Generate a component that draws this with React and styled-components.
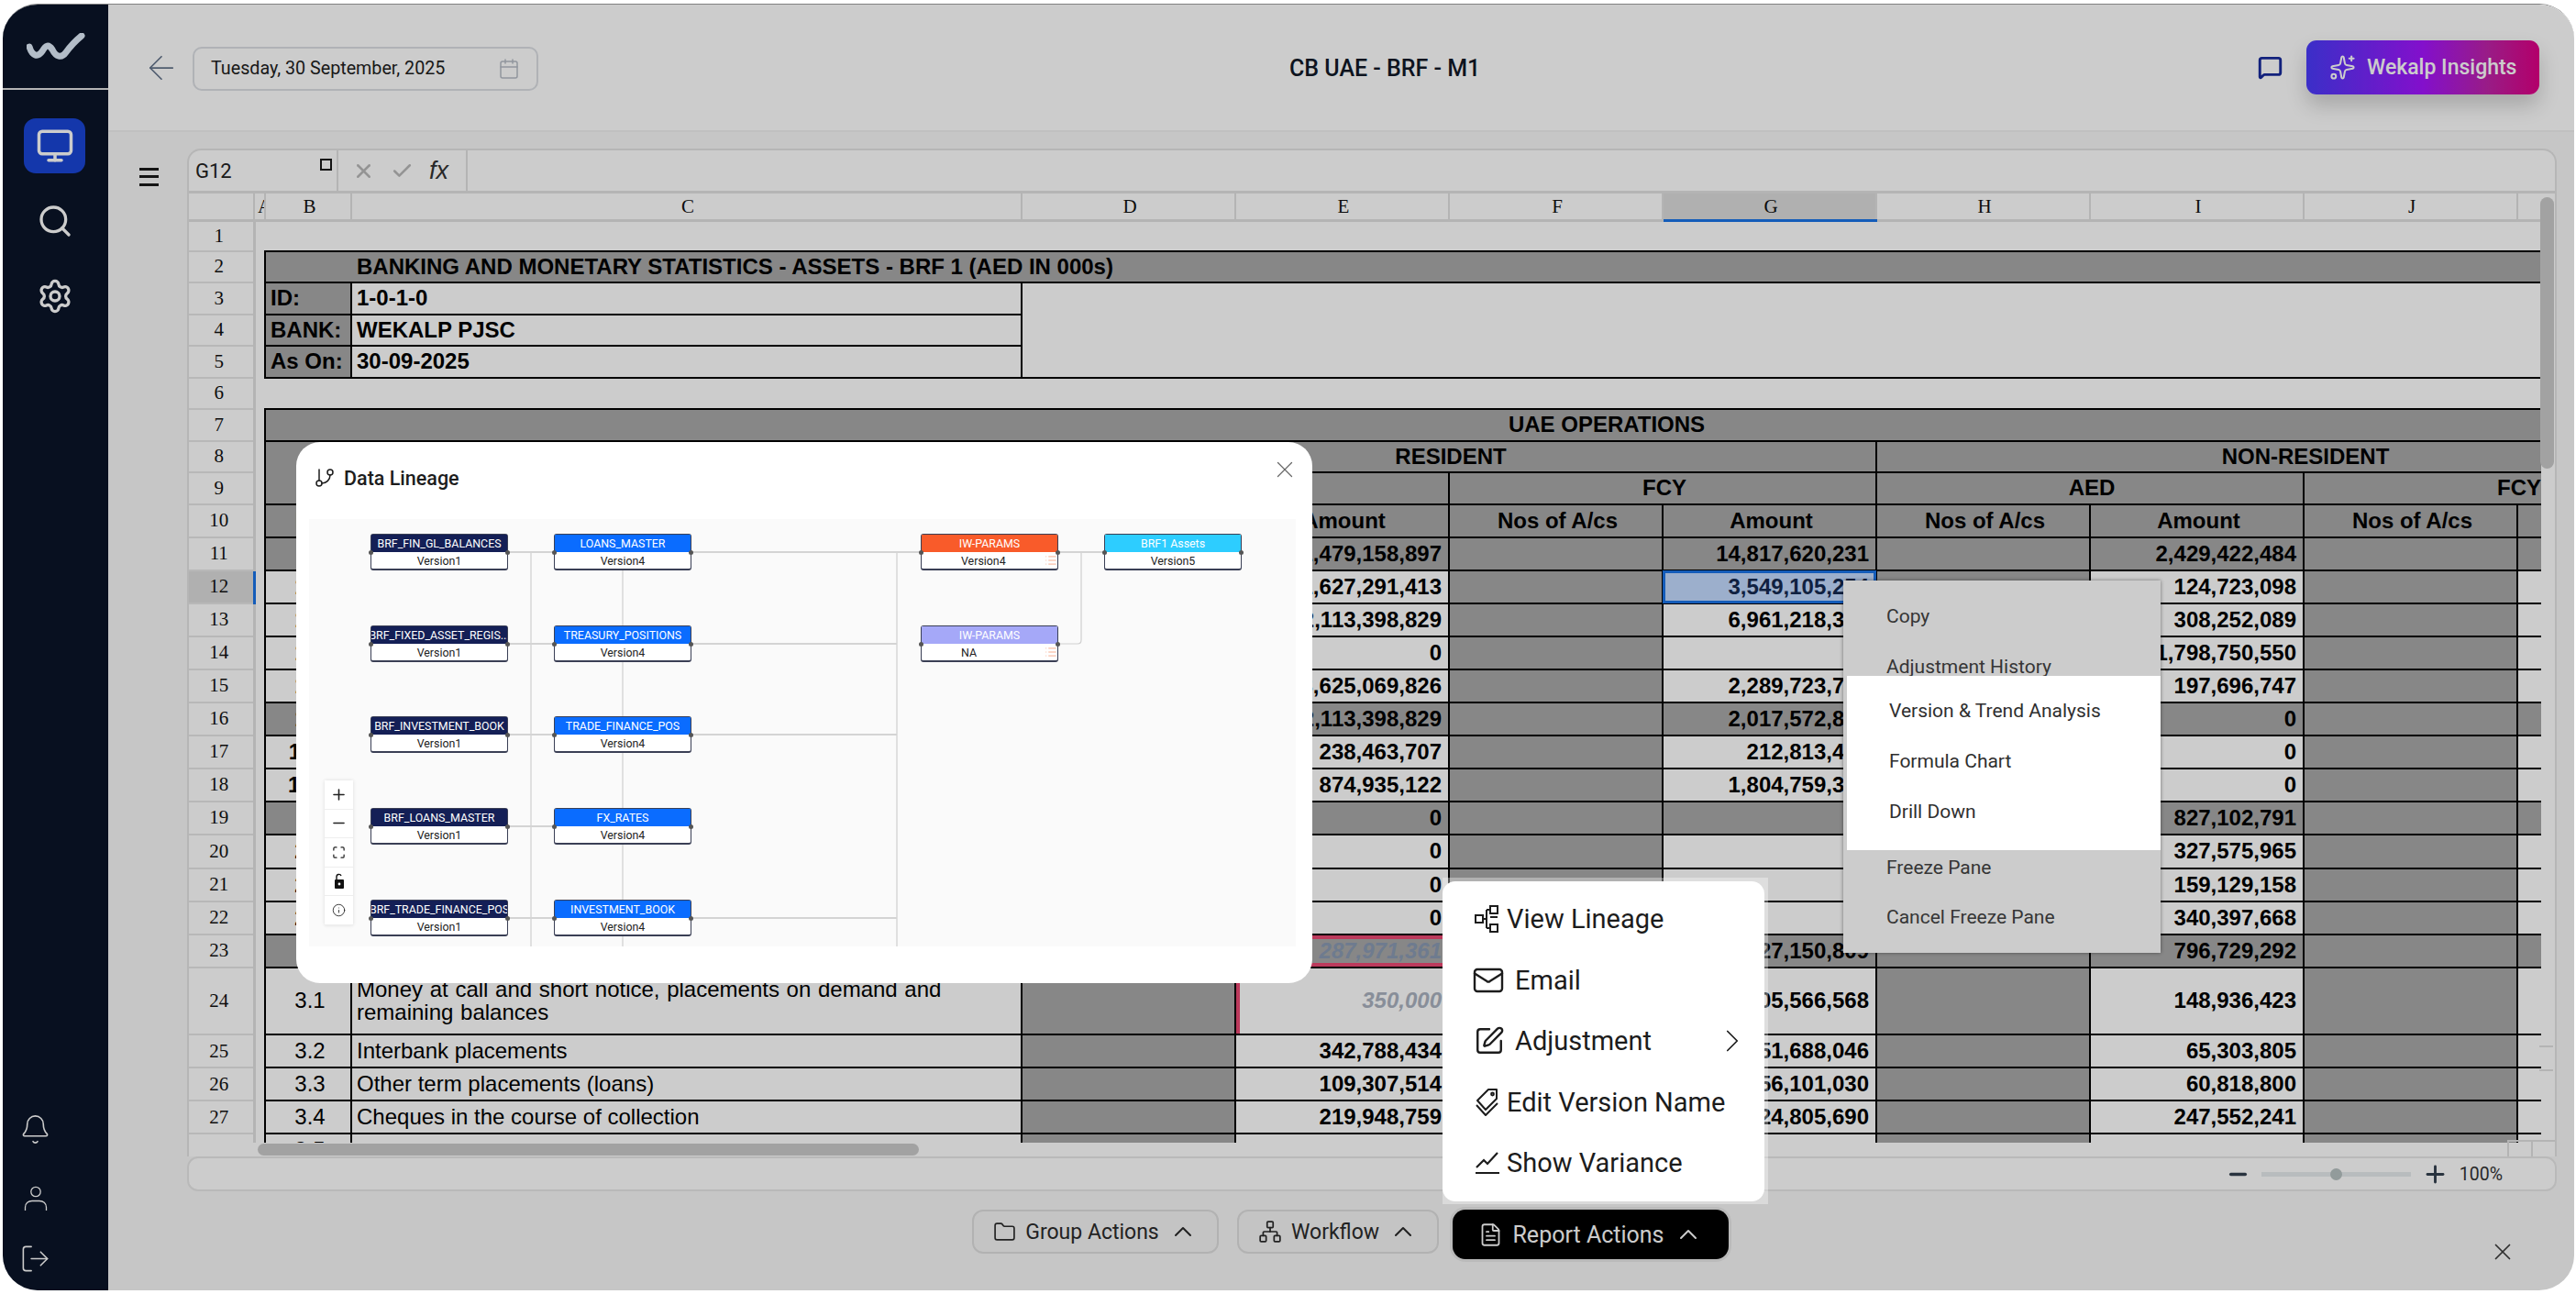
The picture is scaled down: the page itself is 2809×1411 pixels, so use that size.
import React from 'react';
import styled, { createGlobalStyle } from 'styled-components';
import {
  ArrowLeft, Bell, Calendar, Check, ChevronRight, ChevronUp, FileText, Folder, GitBranch, Info, List,
  LogOut, Mail, Maximize, MessageSquare, Minus, Monitor, Network, Plus, Search, Settings, Sparkles,
  SquarePen, X,
} from 'lucide-react';

const GlobalStyle = createGlobalStyle`
  html, body { margin: 0; padding: 0; background: #fff; }
  * { box-sizing: border-box; }
  #root { font-family: Roboto, "Liberation Sans", sans-serif; }
`;

const Frame = styled.div`
  position: relative;
  display: flex;
  width: 2804px;
  height: 1403px;
  margin: 4px 0 0 3px;
  border-top: 1px solid #808080;
  border-radius: 38px;
  overflow: hidden;
  background: #fff;
`;

const Scrim = styled.div`
  position: absolute;
  inset: 0;
  z-index: 2;
  background: rgba(0, 0, 0, 0.2);
`;

/* sidebar */
const Sidebar = styled.aside`
  flex: 0 0 115px;
  display: flex;
  flex-direction: column;
  background: #0b1528;
  color: #fff;
`;
const LogoBlock = styled.div`
  height: 93px;
  display: flex;
  align-items: center;
  justify-content: center;
  border-bottom: 2px solid #e2e2e2;
`;
const NavList = styled.nav`
  display: flex;
  flex-direction: column;
  gap: 22px;
  padding: 31px 0 0 23px;
  flex: 1;
`;
const NavItem = styled.div`
  width: 67px;
  height: 60px;
  border-radius: 13px;
  display: flex;
  align-items: center;
  justify-content: center;
  background: ${(p) => (p.$active ? '#1a45d6' : 'transparent')};
`;
const SideFoot = styled.div`
  width: 35px;
  margin-left: 18px;
  padding-bottom: 17px;
  display: flex;
  flex-direction: column;
  align-items: center;
  gap: 34px;
`;
const BellIcon = styled(Bell)`
  margin-bottom: 10px;
`;

/* main */
const Main = styled.main`
  flex: 1;
  display: flex;
  flex-direction: column;
  min-width: 0;
  background: #f8f8f8;
`;
const Header = styled.header`
  height: 139px;
  flex: none;
  display: flex;
  align-items: center;
  padding: 0 38px 0 37px;
  background: #fff;
  border-bottom: 2px solid #f1f1f1;
`;
const HeaderLeft = styled.div`
  width: 1251px;
  display: flex;
  align-items: center;
  gap: 13px;
`;
const BackIcon = styled(ArrowLeft)`
  color: #64748b;
`;
const DateField = styled.div`
  width: 377px;
  height: 48px;
  margin-top: 2px;
  border: 2px solid #dcdfe4;
  border-radius: 10px;
  padding: 0 18px;
  display: flex;
  align-items: center;
  justify-content: space-between;
  font-size: 19.7px;
  color: #1e1e1e;
`;
const Title = styled.h1`
  margin: 2px 0 0;
  font-size: 25px;
  font-weight: 500;
  color: #111827;
`;
const HeaderRight = styled.div`
  margin-left: auto;
  display: flex;
  align-items: center;
  gap: 26px;
`;
const InsightsButton = styled.button`
  width: 254px;
  height: 59px;
  border: none;
  border-radius: 11px;
  display: flex;
  align-items: center;
  gap: 12px;
  padding: 0 0 0 25px;
  font: 500 23px Roboto, sans-serif;
  color: #fff;
  background: linear-gradient(90deg, #4a3bfb 0%, #a414ff 50%, #c023a8 78%, #e00085 100%);
  box-shadow: 0 12px 22px rgba(0, 0, 0, 0.18);
`;
const Workspace = styled.div`
  height: 1155px;
  flex: none;
  display: flex;
  gap: 31px;
  padding: 18px 19px 0 34px;
`;
const BurgerBars = styled.div`
  flex: none;
  width: 21px;
  height: 20px;
  margin-top: 21px;
  border-top: 3px solid #1a1a1a;
  border-bottom: 3px solid #1a1a1a;
  position: relative;
  &::after {
    content: '';
    position: absolute;
    left: 0;
    right: 0;
    top: 5px;
    height: 3px;
    background: #1a1a1a;
  }
`;

/* spreadsheet */
const Sheet = styled.section`
  width: 2584px;
  display: flex;
  flex-direction: column;
`;
const SheetBody = styled.div`
  position: relative;
  height: 1100px;
  background: #fff;
  border: 2px solid #e4e4e4;
  border-bottom: none;
  border-radius: 15px 15px 0 0;
  overflow: hidden;
`;
const FormulaBar = styled.div`
  height: 47px;
  display: flex;
  align-items: stretch;
  border-bottom: 3px solid #e2e2e2;
`;
const NameBox = styled.div`
  position: relative;
  width: 163px;
  padding-left: 7px;
  display: flex;
  align-items: center;
  font-size: 22px;
  color: #222;
  border-right: 2px solid #e2e2e2;
`;
const NameBoxHandle = styled.span`
  position: absolute;
  top: 9px;
  right: 5px;
  width: 13px;
  height: 13px;
  border: 2px solid #1a1a1a;
`;
const FormulaTools = styled.div`
  width: 141px;
  display: flex;
  align-items: center;
  gap: 17px;
  padding-left: 15px;
  color: #b9b9b9;
  border-right: 2px solid #e2e2e2;
`;
const FxMark = styled.span`
  font: italic 27px "Liberation Sans", sans-serif;
  color: #333;
`;
const GridViewport = styled.div`
  width: 2565px;
  height: 1035px;
  overflow: hidden;
`;
const Grid = styled.table`
  table-layout: fixed;
  border-collapse: collapse;
  width: 3002px;
  font-family: "Liberation Sans", Arial, sans-serif;
  font-size: 24px;
  color: #000;
`;
const GridRow = styled.tr`
  height: ${(p) => p.$h}px;
`;
const ColHead = styled.th`
  font: 400 21px "Liberation Serif", serif;
  color: #111;
  padding: 0 0 0 3px;
  overflow: hidden;
  border-right: 2px solid #e2e2e2;
  border-bottom: 3px solid ${(p) => (p.$active ? '#1a73e8' : '#e2e2e2')};
  background: ${(p) => (p.$active ? '#dcdcdc' : '#fff')};
`;
const RowHead = styled.td`
  font: 400 21px "Liberation Serif", serif;
  color: #111;
  text-align: center;
  padding: 0 4px 0 0;
  border-bottom: 2px solid #e6e6e6;
  border-right: ${(p) => (p.$active ? '3px solid #1a73e8' : '3px solid #e2e2e2')};
  background: ${(p) => (p.$active ? '#dcdcdc' : '#fff')};
`;
const Gutter = styled.td`
  padding: 0;
  background: #fff;
`;
const Cell = styled.td`
  padding: ${(p) => {
    if (p.$indent) return `0 8px 0 ${p.$indent}px`;
    if (p.$align === 'center') return '0 4px 0 8px';
    return p.$align === 'right' ? '0 7px' : '0 5px';
  }};
  border: 2px solid #000;
  background: ${(p) => (p.$dark ? '#a9a9a9' : '#fff')};
  font-weight: ${(p) => (p.$plain ? 400 : 700)};
  text-align: ${(p) => p.$align || 'left'};
  white-space: ${(p) => (p.$wrap ? 'normal' : 'nowrap')};
  line-height: ${(p) => (p.$wrap ? '25.5px' : 'normal')};
  word-spacing: ${(p) => (p.$wrap ? '1px' : 'normal')};
  overflow: hidden;
`;
const SelectedCell = styled(Cell)`
  background: #c3dbff;
  color: #142a52;
  outline: 3px solid #1a73e8;
  outline-offset: -3px;
`;
const FlaggedCell = styled(Cell)`
  font-style: italic;
  color: ${(p) => (p.$dark ? '#8a9ab3' : '#aab2c0')};
  box-shadow: ${(p) => (p.$dark ? 'inset 0 4px 0 #ec4973, inset 0 -4px 0 #ec4973' : 'inset 4px 0 0 #ec4973')};
`;
const HScroll = styled.div`
  height: 16px;
  padding: 1px 0 0 75px;
`;
const HThumb = styled.div`
  width: 721px;
  height: 13px;
  border-radius: 7px;
  background: #cbcbcb;
`;
const VThumb = styled.div`
  position: absolute;
  top: 51px;
  right: 1px;
  width: 15px;
  height: 296px;
  border-radius: 8px;
  background: #cbcbcb;
`;
const ScrollTick = styled.div`
  position: absolute;
  top: ${(p) => p.$top}px;
  right: 2px;
  width: 15px;
  height: 2px;
  background: #e2e2e2;
`;
const CornerBox = styled.div`
  position: absolute;
  right: 0;
  bottom: 0;
  width: 52px;
  height: 18px;
  border-left: 2px solid #e2e2e2;
  border-top: 2px solid #e2e2e2;
  &::after {
    content: '';
    position: absolute;
    left: 24px;
    top: 0;
    bottom: 0;
    border-left: 2px solid #e2e2e2;
  }
`;
const SheetFooter = styled.div`
  height: 38px;
  display: flex;
  align-items: center;
  justify-content: flex-end;
  padding-right: 57px;
  background: #fff;
  border: 2px solid #e8e8e8;
  border-radius: 12px;
  color: #34404f;
`;
const ZoomTrack = styled.div`
  position: relative;
  width: 163px;
  height: 5px;
  margin: 0 12px;
  background: #e6ebee;
  &::after {
    content: '';
    position: absolute;
    left: 75px;
    top: -4px;
    width: 13px;
    height: 13px;
    border-radius: 50%;
    background: #b7c2c2;
  }
`;
const ZoomLabel = styled.span`
  margin-left: 12px;
  font-size: 19.5px;
  color: #333;
`;

/* action bar */
const ActionBar = styled.div`
  position: relative;
  flex: 1;
  display: flex;
  align-items: flex-start;
  gap: 20px;
  padding: 20px 63px 0 942px;
`;
const ActionButton = styled.button`
  height: ${(p) => (p.$dark ? 54 : 48)}px;
  width: ${(p) => p.$w}px;
  margin-left: ${(p) => (p.$dark ? -5 : 0)}px;
  display: flex;
  align-items: center;
  justify-content: center;
  gap: 10px;
  border: ${(p) => (p.$dark ? 'none' : '2px solid #dfdfdf')};
  border-radius: ${(p) => (p.$dark ? 14 : 12)}px;
  background: ${(p) => (p.$dark ? '#000' : '#f5f5f5')};
  color: ${(p) => (p.$dark ? '#fff' : '#2b2b2b')};
  font: 400 ${(p) => (p.$dark ? 25 : 23)}px Roboto, sans-serif;
  box-shadow: ${(p) => (p.$dark ? '0 0 0 3px rgba(0, 0, 0, 0.06)' : 'none')};
`;
const BarClose = styled.div`
  margin-left: auto;
  margin-top: 31px;
  color: #3c3c3c;
  display: flex;
`;

/* right click menu, partly lifted over the scrim */
const ContextMenu = styled.div`
  position: absolute;
  left: 2007px;
  top: 628px;
  z-index: 1;
  width: 346px;
  height: 406px;
  padding-top: 12px;
  background: #fff;
  box-shadow: 0 0 4px rgba(0, 0, 0, 0.45);
`;
const ContextItem = styled.div`
  height: 54.7px;
  display: flex;
  align-items: center;
  padding-left: ${(p) => (p.$lifted ? 46 : 47)}px;
  font-size: 21px;
  color: ${(p) => (p.$lifted ? '#2f2f2f' : '#444')};
`;
const ContextGap = styled.div`
  height: 164px;
`;
const ContextLifted = styled.div`
  position: absolute;
  left: 2011px;
  top: 732px;
  z-index: 3;
  width: 342px;
  height: 190px;
  padding-top: 11px;
  background: #fff;
`;

/* report actions menu */
const MenuHalo = styled.div`
  position: absolute;
  left: 1570px;
  top: 952px;
  z-index: 3;
  width: 355px;
  height: 356px;
  padding: 4px 4px 3px 0;
  background: rgba(255, 255, 255, 0.35);
`;
const MenuPanel = styled.div`
  height: 100%;
  background: #fff;
  border-radius: 14px;
  padding: 8px 0 0 35px;
  display: flex;
  flex-direction: column;
`;
const MenuItem = styled.div`
  height: 66.5px;
  display: flex;
  align-items: center;
  gap: ${(p) => (p.$wide ? 11 : 8)}px;
  font-size: 29px;
  color: #1c1c1c;
`;
const MailIcon = styled(Mail)`
  margin-left: -3px;
`;
const PenIcon = styled(SquarePen)`
  margin-left: -1px;
`;
const MenuChevron = styled(ChevronRight)`
  margin-left: auto;
  margin-right: 14px;
`;

/* data lineage dialog */
const Modal = styled.div`
  position: absolute;
  left: 320px;
  top: 477px;
  z-index: 3;
  width: 1108px;
  height: 590px;
  border-radius: 26px;
  background: #fff;
`;
const ModalHead = styled.div`
  height: 84px;
  display: flex;
  align-items: center;
  gap: 9px;
  padding: 0 0 6px 19px;
  font-size: 21.5px;
  font-weight: 500;
  color: #1d1d1d;
`;
const ModalClose = styled(X)`
  position: absolute;
  top: 15px;
  right: 15px;
  color: #666;
`;
const Canvas = styled.div`
  position: relative;
  width: 1076px;
  height: 466px;
  margin: 0 0 0 14px;
  background: #fafafa;
  overflow: hidden;
`;
const Edges = styled.svg`
  position: absolute;
  inset: 0;
`;
const Node = styled.div`
  position: absolute;
  left: ${(p) => p.$x}px;
  top: ${(p) => p.$y}px;
  width: 150px;
  height: 40px;
  background: #fff;
  border: 1px solid #3a3f55;
  border-width: 1px 1px 2px;
  border-radius: 3px;
  &::before,
  &::after {
    content: '';
    position: absolute;
    top: 17px;
    width: 5px;
    height: 5px;
    border-radius: 50%;
    background: #555;
  }
  &::before { left: -3px; }
  &::after { right: -3px; }
`;
const NodeTitle = styled.div`
  height: 19px;
  display: flex;
  align-items: center;
  justify-content: center;
  font-size: 12.4px;
  white-space: nowrap;
  overflow: hidden;
  color: #fff;
  background: ${(p) => p.$color};
`;
const NodeVersion = styled.div`
  position: relative;
  height: 19px;
  display: flex;
  align-items: center;
  justify-content: ${(p) => (p.$listed ? 'flex-start' : 'center')};
  padding-left: ${(p) => (p.$listed ? 43 : 0)}px;
  font-size: 12.4px;
  color: #222;
`;
const NodeList = styled(List)`
  position: absolute;
  right: 0;
  top: 2px;
  color: #f7a888;
`;
const Controls = styled.div`
  position: absolute;
  left: 17px;
  top: 285px;
  width: 31px;
  display: flex;
  flex-direction: column;
  background: #fff;
  box-shadow: 0 0 4px rgba(0, 0, 0, 0.12);
  z-index: 1;
`;
const ControlButton = styled.div`
  height: 31.6px;
  display: flex;
  align-items: center;
  justify-content: center;
  border-bottom: 1px solid #eee;
  color: #222;
`;

const Logo = () => (
  <svg width="64" height="30" viewBox="0 0 64 30" fill="none">
    <path d="M3 15 C6 25 12 27 17 20 C21 13 24 12 28 18 C32 26 38 28 43 21 C48 14 54 8 60 3" stroke="#e0edfb" strokeWidth="7" strokeLinecap="round" />
  </svg>
);

const PersonIcon = () => (
  <svg width="28" height="28" viewBox="0 0 28 28" fill="none" stroke="#fff" strokeWidth="1.3">
    <circle cx="14" cy="6.5" r="5.2" />
    <path d="M2.5 27 V23.5 C2.5 19 6 16.5 10 16.5 H18 C22 16.5 25.5 19 25.5 23.5 V27" />
  </svg>
);

const LineageIcon = () => (
  <svg width="27" height="32" viewBox="0 0 27 32" fill="none" stroke="#1c1c1c" strokeWidth="2">
    <rect x="1" y="12" width="8" height="8" />
    <rect x="17" y="2" width="8" height="8" />
    <rect x="17" y="22" width="8" height="8" />
    <path d="M9 16 H13 M13 6 V26 M13 6 H17 M13 26 H17 M17 14 H25" />
  </svg>
);

const VersionTagIcon = () => (
  <svg width="27" height="32" viewBox="0 0 27 32" fill="none" stroke="#1c1c1c" strokeWidth="2" strokeLinejoin="round">
    <path d="M15 2 H24 V12 L12 24 L3 14 Z" />
    <circle cx="19.5" cy="7" r="1.4" />
    <path d="M2 19 L12 30 L25 17" />
  </svg>
);

const VarianceIcon = () => (
  <svg width="27" height="26" viewBox="0 0 27 26" fill="none" stroke="#1c1c1c" strokeWidth="2.2">
    <path d="M1 24 H27 M2 18 L10 10 L14 14 L25 2" />
  </svg>
);

const LockIcon = () => (
  <svg width="14" height="20" viewBox="0 0 14 20" fill="#111">
    <rect x="2" y="8" width="10" height="10" rx="1" />
    <path d="M4 8 V5 C4 2 8 1.5 9 4" fill="none" stroke="#111" strokeWidth="1.4" />
    <circle cx="7" cy="13" r="1.4" fill="#fff" />
  </svg>
);

const dataRows = [
  { n: 11, h: 36, no: '1', dark: true, e: '1,479,158,897', g: '14,817,620,231', i: '2,429,422,484' },
  { n: 12, h: 36, no: '1.1', e: '1,627,291,413', g: '3,549,105,254', i: '124,723,098', selected: true },
  { n: 13, h: 36, no: '1.2', e: '2,113,398,829', g: '6,961,218,389', i: '308,252,089' },
  { n: 14, h: 36, no: '1.3', e: '0', g: '', i: '1,798,750,550' },
  { n: 15, h: 36, no: '1.4', e: '3,625,069,826', g: '2,289,723,781', i: '197,696,747' },
  { n: 16, h: 36, no: '1.5', dark: true, e: '2,113,398,829', g: '2,017,572,864', i: '0' },
  { n: 17, h: 36, no: '1.5a', e: '238,463,707', g: '212,813,452', i: '0' },
  { n: 18, h: 36, no: '1.5b', e: '874,935,122', g: '1,804,759,319', i: '0' },
  { n: 19, h: 36, no: '2', dark: true, e: '0', g: '', i: '827,102,791' },
  { n: 20, h: 37, no: '2.1', e: '0', g: '', i: '327,575,965' },
  { n: 21, h: 36, no: '2.2', e: '0', g: '', i: '159,129,158' },
  { n: 22, h: 36, no: '2.3', e: '0', g: '', i: '340,397,668' },
  { n: 23, h: 36, no: '3', dark: true, e: '287,971,361', g: '8,127,150,809', i: '796,729,292', flagged: true },
  { n: 24, h: 73.5, no: '3.1', e: '350,000', g: '6,105,566,568', i: '148,936,423', flagged: true, wrap: true, label: 'Money at call and short notice, placements on demand and remaining balances' },
  { n: 25, h: 36, no: '3.2', e: '342,788,434', g: '151,688,046', i: '65,303,805', label: 'Interbank placements' },
  { n: 26, h: 36, no: '3.3', e: '109,307,514', g: '56,101,030', i: '60,818,800', label: 'Other term placements (loans)' },
  { n: 27, h: 36, no: '3.4', e: '219,948,759', g: '24,805,690', i: '247,552,241', label: 'Cheques in the course of collection' },
  { n: 28, h: 36, no: '3.5', e: '', g: '', i: '', label: '' },
];

const columns = ['A', 'B', 'C', 'D', 'E', 'F', 'G', 'H', 'I', 'J', 'K', 'L'];
const colWidth = (c) => (c === 'A' ? 12 : c === 'B' ? 94 : c === 'C' ? 731 : 233);

const Amount = ({ row, value }) => {
  if (row.flagged && value === row.e) {
    return <FlaggedCell $dark={row.dark} $align="right">{value}</FlaggedCell>;
  }
  if (row.selected && value === row.g) {
    return <SelectedCell $align="right">{value}</SelectedCell>;
  }
  return <Cell $dark={row.dark} $align="right">{value}</Cell>;
};

const DataRow = ({ row }) => {
  const isItem = row.n >= 24;
  return (
    <GridRow $h={row.h}>
      <RowHead $active={row.selected}>{row.n}</RowHead>
      <Gutter />
      <Cell $dark={row.dark} $align="center" $plain={isItem}>{row.no}</Cell>
      <Cell $dark={row.dark} $plain $wrap={row.wrap}>{row.label}</Cell>
      <Cell $dark />
      <Amount row={row} value={row.e} />
      <Cell $dark />
      <Amount row={row} value={row.g} />
      <Cell $dark />
      <Amount row={row} value={row.i} />
      <Cell $dark />
      <Cell $dark={row.dark} />
      <Cell $dark />
    </GridRow>
  );
};

const SpreadsheetGrid = () => (
  <Grid>
    <colgroup>
      <col width="71" />
      {columns.map((c) => <col key={c} width={colWidth(c)} />)}
    </colgroup>
    <tbody>
      <GridRow $h={29.5}>
        <ColHead />
        {columns.map((c) => <ColHead key={c} $active={c === 'G'}>{c}</ColHead>)}
      </GridRow>
      <GridRow $h={33}><RowHead>1</RowHead><Gutter colSpan={12} /></GridRow>
      <GridRow $h={34}>
        <RowHead>2</RowHead>
        <Gutter />
        <Cell $dark colSpan={11} $indent={99}>BANKING AND MONETARY STATISTICS - ASSETS - BRF 1 (AED IN 000s)</Cell>
      </GridRow>
      <GridRow $h={35}>
        <RowHead>3</RowHead>
        <Gutter />
        <Cell $dark>ID:</Cell>
        <Cell>1-0-1-0</Cell>
        <Cell colSpan={9} rowSpan={3} />
      </GridRow>
      <GridRow $h={34}>
        <RowHead>4</RowHead>
        <Gutter />
        <Cell $dark>BANK:</Cell>
        <Cell>WEKALP PJSC</Cell>
      </GridRow>
      <GridRow $h={35}>
        <RowHead>5</RowHead>
        <Gutter />
        <Cell $dark>As On:</Cell>
        <Cell>30-09-2025</Cell>
      </GridRow>
      <GridRow $h={34}><RowHead>6</RowHead><Gutter colSpan={12} /></GridRow>
      <GridRow $h={35}>
        <RowHead>7</RowHead>
        <Gutter />
        <Cell $dark colSpan={11} $align="center">UAE OPERATIONS</Cell>
      </GridRow>
      <GridRow $h={34}>
        <RowHead>8</RowHead>
        <Gutter />
        <Cell $dark colSpan={2} rowSpan={2} />
        <Cell $dark colSpan={4} $align="center">RESIDENT</Cell>
        <Cell $dark colSpan={4} $align="center">NON-RESIDENT</Cell>
        <Cell $dark />
      </GridRow>
      <GridRow $h={35}>
        <RowHead>9</RowHead>
        <Gutter />
        <Cell $dark colSpan={2} $align="center">AED</Cell>
        <Cell $dark colSpan={2} $align="center">FCY</Cell>
        <Cell $dark colSpan={2} $align="center">AED</Cell>
        <Cell $dark colSpan={2} $align="center">FCY</Cell>
        <Cell $dark />
      </GridRow>
      <GridRow $h={36}>
        <RowHead>10</RowHead>
        <Gutter />
        <Cell $dark $align="center">No</Cell>
        <Cell $dark />
        {['D', 'F', 'H', 'J'].map((c) => (
          <React.Fragment key={c}>
            <Cell $dark $align="center">Nos of A/cs</Cell>
            <Cell $dark $align="center">Amount</Cell>
          </React.Fragment>
        ))}
        <Cell $dark />
      </GridRow>
      {dataRows.map((row) => <DataRow key={row.n} row={row} />)}
    </tbody>
  </Grid>
);

const lineageNodes = [
  { name: 'BRF_FIN_GL_BALANCES', ver: 'Version1', x: 67, y: 16, color: '#141f56' },
  { name: 'BRF_FIXED_ASSET_REGIS...', ver: 'Version1', x: 67, y: 116, color: '#141f56' },
  { name: 'BRF_INVESTMENT_BOOK', ver: 'Version1', x: 67, y: 215, color: '#141f56' },
  { name: 'BRF_LOANS_MASTER', ver: 'Version1', x: 67, y: 315, color: '#141f56' },
  { name: 'BRF_TRADE_FINANCE_POS', ver: 'Version1', x: 67, y: 415, color: '#141f56' },
  { name: 'LOANS_MASTER', ver: 'Version4', x: 267, y: 16, color: '#0a6cff' },
  { name: 'TREASURY_POSITIONS', ver: 'Version4', x: 267, y: 116, color: '#0a6cff' },
  { name: 'TRADE_FINANCE_POS', ver: 'Version4', x: 267, y: 215, color: '#0a6cff' },
  { name: 'FX_RATES', ver: 'Version4', x: 267, y: 315, color: '#0a6cff' },
  { name: 'INVESTMENT_BOOK', ver: 'Version4', x: 267, y: 415, color: '#0a6cff' },
  { name: 'IW-PARAMS', ver: 'Version4', x: 667, y: 16, color: '#f95b2a', listed: true },
  { name: 'IW-PARAMS', ver: 'NA', x: 667, y: 116, color: '#a5a8f8', listed: true },
  { name: 'BRF1 Assets', ver: 'Version5', x: 867, y: 16, color: '#2dcdff' },
];

const LineageEdges = () => (
  <Edges width="1076" height="466" fill="none">
    <g stroke="#cfcfcf" strokeWidth="1.2">
      <path d="M242 36 V466 M342 56 V466 M641 36 V466 M842 36 V132 Q842 136 838 136 H817" />
    </g>
    <g stroke="#d4d4d4" strokeWidth="2">
      <path d="M217 36 H267 M217 136 H267 M217 235 H267 M217 335 H267 M217 435 H267" />
      <path d="M417 36 H667 M417 136 H641 M417 235 H641 M417 435 H641 M817 36 H867" />
    </g>
  </Edges>
);

const DataLineage = () => (
  <Modal>
    <ModalHead>
      <GitBranch size={24} strokeWidth={1.5} />
      Data Lineage
    </ModalHead>
    <ModalClose size={30} strokeWidth={1} />
    <Canvas>
      <LineageEdges />
      {lineageNodes.map((node) => (
        <Node key={`${node.name}-${node.x}-${node.y}`} $x={node.x} $y={node.y}>
          <NodeTitle $color={node.color}>{node.name}</NodeTitle>
          <NodeVersion $listed={node.listed}>
            {node.ver}
            {node.listed && <NodeList size={14} strokeWidth={1.6} />}
          </NodeVersion>
        </Node>
      ))}
      <Controls>
        <ControlButton><Plus size={19} strokeWidth={2} /></ControlButton>
        <ControlButton><Minus size={19} strokeWidth={2} /></ControlButton>
        <ControlButton><Maximize size={15} strokeWidth={2} /></ControlButton>
        <ControlButton><LockIcon /></ControlButton>
        <ControlButton><Info size={15} strokeWidth={1.4} /></ControlButton>
      </Controls>
    </Canvas>
  </Modal>
);

export default function App() {
  return (
    <>
      <GlobalStyle />
      <Frame>
        <Sidebar>
          <LogoBlock><Logo /></LogoBlock>
          <NavList>
            <NavItem $active><Monitor size={42} strokeWidth={2} /></NavItem>
            <NavItem><Search size={40} strokeWidth={2} /></NavItem>
            <NavItem><Settings size={40} strokeWidth={2} /></NavItem>
          </NavList>
          <SideFoot>
            <BellIcon size={35} strokeWidth={1.1} />
            <PersonIcon />
            <LogOut size={35} strokeWidth={1.1} />
          </SideFoot>
        </Sidebar>
        <Main>
          <Header>
            <HeaderLeft>
              <BackIcon size={42} strokeWidth={1} />
              <DateField>
                Tuesday, 30 September, 2025
                <Calendar size={24} strokeWidth={1.5} color="#b6bcc6" />
              </DateField>
            </HeaderLeft>
            <Title>CB UAE - BRF - M1</Title>
            <HeaderRight>
              <MessageSquare size={27} strokeWidth={2.6} color="#172a9c" />
              <InsightsButton>
                <Sparkles size={29} strokeWidth={1.7} />
                Wekalp Insights
              </InsightsButton>
            </HeaderRight>
          </Header>
          <Workspace>
            <BurgerBars />
            <Sheet>
              <SheetBody>
                <FormulaBar>
                  <NameBox>G12<NameBoxHandle /></NameBox>
                  <FormulaTools>
                    <X size={25} strokeWidth={2.4} />
                    <Check size={25} strokeWidth={2.4} />
                    <FxMark>fx</FxMark>
                  </FormulaTools>
                </FormulaBar>
                <GridViewport><SpreadsheetGrid /></GridViewport>
                <HScroll><HThumb /></HScroll>
                <VThumb />
                <ScrollTick $top={976} />
                <ScrollTick $top={1002} />
                <CornerBox />
              </SheetBody>
              <SheetFooter>
                <Minus size={27} strokeWidth={3} />
                <ZoomTrack />
                <Plus size={29} strokeWidth={2.4} />
                <ZoomLabel>100%</ZoomLabel>
              </SheetFooter>
            </Sheet>
          </Workspace>
          <ActionBar>
            <ActionButton $w={269}>
              <Folder size={25} strokeWidth={1.6} />
              Group Actions
              <ChevronUp size={32} strokeWidth={1.5} />
            </ActionButton>
            <ActionButton $w={220}>
              <Network size={26} strokeWidth={1.6} />
              Workflow
              <ChevronUp size={32} strokeWidth={1.5} />
            </ActionButton>
            <ActionButton $dark $w={301}>
              <FileText size={27} strokeWidth={1.6} />
              Report Actions
              <ChevronUp size={32} strokeWidth={1.5} />
            </ActionButton>
            <BarClose><X size={30} strokeWidth={1.4} /></BarClose>
          </ActionBar>
        </Main>
        <ContextMenu>
          <ContextItem>Copy</ContextItem>
          <ContextItem>Adjustment History</ContextItem>
          <ContextGap />
          <ContextItem>Freeze Pane</ContextItem>
          <ContextItem>Cancel Freeze Pane</ContextItem>
        </ContextMenu>
        <Scrim />
        <ContextLifted>
          <ContextItem $lifted>Version &amp; Trend Analysis</ContextItem>
          <ContextItem $lifted>Formula Chart</ContextItem>
          <ContextItem $lifted>Drill Down</ContextItem>
        </ContextLifted>
        <DataLineage />
        <MenuHalo>
          <MenuPanel>
            <MenuItem><LineageIcon />View Lineage</MenuItem>
            <MenuItem $wide><MailIcon size={36} strokeWidth={1.6} />Email</MenuItem>
            <MenuItem $wide><PenIcon size={34} strokeWidth={1.7} />Adjustment<MenuChevron size={42} strokeWidth={1} /></MenuItem>
            <MenuItem><VersionTagIcon />Edit Version Name</MenuItem>
            <MenuItem><VarianceIcon />Show Variance</MenuItem>
          </MenuPanel>
        </MenuHalo>
      </Frame>
    </>
  );
}
